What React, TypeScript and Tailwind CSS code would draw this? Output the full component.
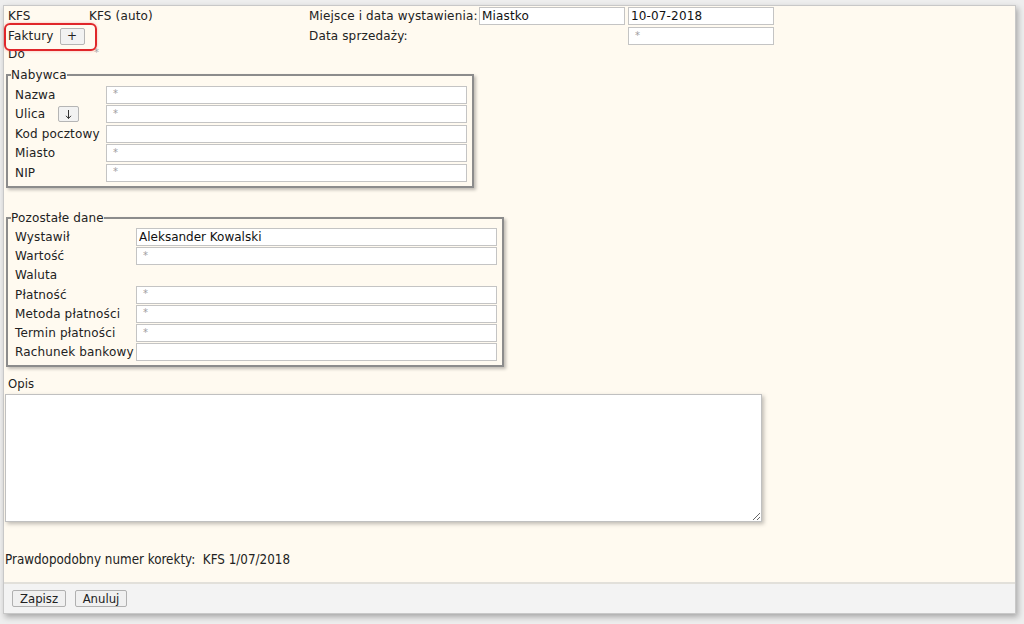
import React from 'react';

const font = "font-['DejaVu_Sans',Verdana,sans-serif]";
const cond = "font-['DejaVu_Sans_Condensed','DejaVu_Sans',sans-serif]";

const Field: React.FC<{ value?: string; placeholder?: string; className?: string }> = ({ value, placeholder, className = '' }) => (
  <input
    readOnly
    defaultValue={value}
    placeholder={placeholder}
    className={`h-[18px] border border-[#c4c4c4] bg-white text-[12px] text-[#111] outline-none placeholder:text-[#a0a0a0] placeholder:text-[10px] ${
      value ? 'pl-[2px]' : 'pl-[6px] pb-[3px]'
    } ${className}`}
  />
);

const SmallBtn: React.FC<{ children: React.ReactNode; className?: string }> = ({ children, className = '' }) => (
  <button
    className={`flex items-center justify-center rounded-[2px] border border-[#b5b5b5] bg-[#f2f2f2] text-[12px] leading-none text-[#222] ${className}`}
  >
    {children}
  </button>
);

type Row = { label: string; value?: string; empty?: boolean; noInput?: boolean; extra?: React.ReactNode };

const FieldGroup: React.FC<{
  legend: string;
  rows: Row[];
  labelW: string;
  width: string;
  rowH: string;
  className?: string;
}> = ({ legend, rows, labelW, width, rowH, className = '' }) => (
  <fieldset
    className={`${width} ml-[2px] border-2 border-[#8c8c8c] pl-[7px] pr-[5px] pb-[3px] shadow-[2px_2px_3px_rgba(0,0,0,0.25)] ${className}`}
  >
    <legend className="-ml-[4px] px-0 text-[12px] leading-[14px] tracking-[0.15px] text-[#222]">{legend}</legend>
    <div className="flex flex-col">
      {rows.map((r) => (
        <div key={r.label} className={`flex ${rowH} items-center`}>
          <div className={`${labelW} flex shrink-0 items-center text-[12px] tracking-[0.15px] text-[#222]`}>
            {r.label}
            {r.extra}
          </div>
          {!r.noInput && <Field value={r.value} placeholder={r.value ? undefined : r.empty ? '' : '*'} className="flex-1" />}
        </div>
      ))}
    </div>
  </fieldset>
);

export default function App() {
  return (
    <div className={`h-[624px] w-[1024px] overflow-hidden bg-[#eeeeee] pl-[3px] pt-[5px] ${font}`}>
      <div className="flex h-[609px] w-[1013px] flex-col border border-[#c8c8c8] bg-[#fffaf0] shadow-[2px_3px_6px_rgba(0,0,0,0.3)]">
        <div className="relative flex-1">
          {/* top rows */}
          <div className="flex tracking-[0.15px]">
            <div className="w-[305px] pl-[4px]">
              <div className="flex h-[20px] items-center text-[12px] text-[#222]">
                <span className="w-[81px]">KFS</span>
                <span>KFS (auto)</span>
              </div>
              <div className="flex h-[20px] items-center text-[12px] text-[#222]">
                <span>Faktury</span>
                <SmallBtn className="ml-[6px] h-[17px] w-[25px]">+</SmallBtn>
              </div>
              <div className="flex h-[16px] items-center text-[12px] text-[#222]">
                <span>Do</span>
              </div>
            </div>
            <div className="pt-[1px] text-[12px] text-[#222]">
              <div className="flex h-[18px] items-center">
                <span className="w-[170px]">Miejsce i data wystawienia:</span>
                <Field value="Miastko" className="w-[146px]" />
                <Field value="10-07-2018" className="ml-[3px] w-[146px]" />
              </div>
              <div className="mt-[2px] flex h-[18px] items-center">
                <span className="w-[319px]">Data sprzedaży:</span>
                <Field placeholder="*" className="w-[146px]" />
              </div>
            </div>
          </div>

          <span className="absolute left-[90px] top-[42px] text-[10px] leading-none text-[#a8a8a8]">*</span>

          {/* annotation box */}
          <div className="absolute left-0 top-[17px] h-[28px] w-[93px] rounded-[6px] border-2 border-[#e0262a] shadow-[0_0_3px_rgba(224,38,42,0.3)]" />

          <FieldGroup
            legend="Nabywca"
            width="w-[468px]"
            labelW="w-[91px]"
            rowH="h-[19.5px]"
            className="mt-[6px] pt-[3px]"
            rows={[
              { label: 'Nazwa' },
              {
                label: 'Ulica',
                extra: (
                  <SmallBtn className="ml-[13px] h-[16px] w-[21px]">
                    <svg width="9" height="11" viewBox="0 0 9 11" fill="none" stroke="#333" strokeWidth="1">
                      <path d="M4.5 1v8.5M2 6.8l2.5 2.7 2.5-2.7" />
                    </svg>
                  </SmallBtn>
                ),
              },
              { label: 'Kod pocztowy', empty: true },
              { label: 'Miasto' },
              { label: 'NIP' },
            ]}
          />

          <FieldGroup
            legend="Pozostałe dane"
            width="w-[498px]"
            labelW="w-[121px]"
            rowH="h-[19.2px]"
            className="mt-[23px] pt-[3px]"
            rows={[
              { label: 'Wystawił', value: 'Aleksander Kowalski' },
              { label: 'Wartość' },
              { label: 'Waluta', noInput: true },
              { label: 'Płatność' },
              { label: 'Metoda płatności' },
              { label: 'Termin płatności' },
              { label: 'Rachunek bankowy', empty: true },
            ]}
          />

          <div className={`mt-[9px] pl-[4px] text-[13px] leading-[16px] text-[#222] ${cond}`}>Opis</div>
          <textarea
            readOnly
            className="ml-[1px] mt-[2px] block h-[128px] w-[757px] resize border border-[#c0c0c0] bg-white shadow-[2px_2px_4px_rgba(0,0,0,0.25)] outline-none"
          />

          <div className={`mt-[30px] pl-[1px] text-[13.3px] leading-[16px] text-[#222] ${cond}`}>
            Prawdopodobny numer korekty:&nbsp; KFS 1/07/2018
          </div>
        </div>

        <div className={`flex h-[31px] shrink-0 items-center gap-[9px] border-t-2 border-[#e2e0da] bg-[#f3f3f3] pl-[8px] ${cond}`}>
          <button className="h-[17px] w-[54px] rounded-[2px] border border-[#b0b0b0] bg-[#f0f0f0] text-[13px] leading-none text-[#222]">
            Zapisz
          </button>
          <button className="h-[17px] w-[52px] rounded-[2px] border border-[#b0b0b0] bg-[#f0f0f0] text-[13px] leading-none text-[#222]">
            Anuluj
          </button>
        </div>
      </div>
    </div>
  );
}
